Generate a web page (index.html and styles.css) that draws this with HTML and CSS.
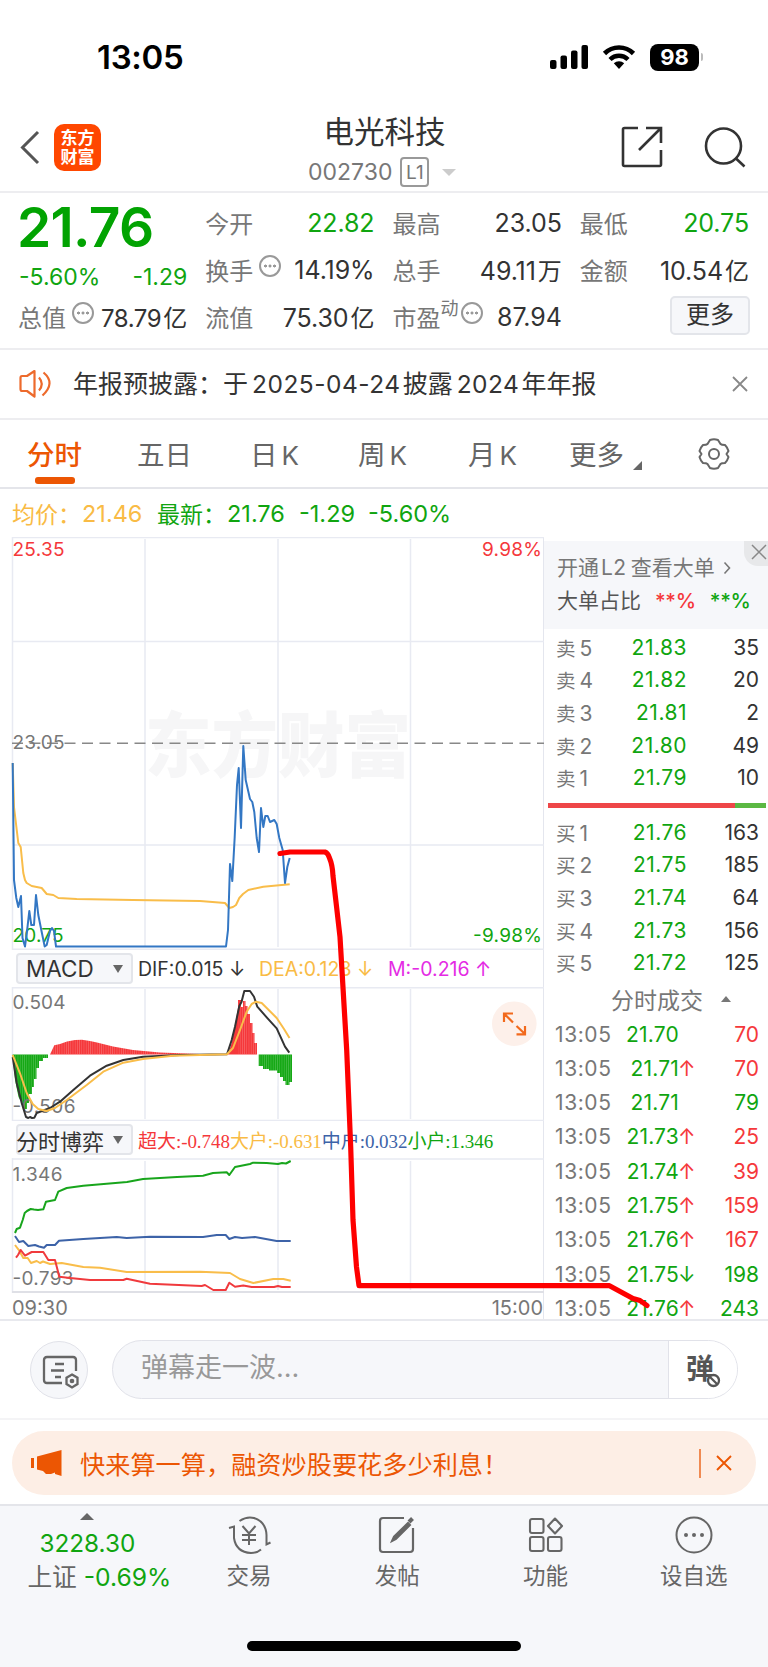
FILE: index.html
```html
<!DOCTYPE html>
<html lang="zh-CN">
<head>
    <meta charset="UTF-8">
    <meta name="viewport" content="width=device-width, initial-scale=1.0">
    <title>电光科技 002730</title>
    <link rel="stylesheet" href="styles.css">
</head>
<body>
<div class="phone">

    <div class="statusBar">
        <div class="time">13:05</div>
        <div class="statusIcons">
            <svg width="38" height="24" viewBox="0 0 38 24">
                <rect x="0" y="15" width="6.500" height="9" rx="2"/>
                <rect x="10.5" y="10.500" width="6.500" height="13.500" rx="2"/>
                <rect x="21" y="5.500" width="6.500" height="18.500" rx="2"/>
                <rect x="31.500" y="0" width="6.500" height="24" rx="2"/>
            </svg>
            <svg class="wifi" width="34" height="24" viewBox="0 0 34 24">
                <path d="M2.500 8.500a20.500 20.500 0 0 1 29 0" fill="none" stroke="#000" stroke-width="4.600"/>
                <path d="M8 14.500a12.800 12.800 0 0 1 18 0" fill="none" stroke="#000" stroke-width="4.400"/>
                <path d="M11.800 18.300a7.500 7.500 0 0 1 10.400 0L17 24z"/>
            </svg>
            <div class="battery">98</div><div class="batteryTip"></div>
        </div>
    </div>

    <div class="header">
        <svg class="back" width="20" height="36" viewBox="0 0 20 36"><path d="M18 2L2.500 17.500L18 33" fill="none" stroke="#555" stroke-width="3"/></svg>
        <div class="logo">东方<br>财富</div>
        <div class="title">
            <div class="name">电光科技</div>
            <div class="code"><span>002730</span><span class="level">L1</span><i class="down"></i></div>
        </div>
        <svg class="share" width="42" height="42" viewBox="0 0 42 42" fill="none" stroke="#333" stroke-width="2.600">
            <path d="M17 2H3.500Q2 2 2 3.500V38.500Q2 40 3.500 40H38.500Q40 40 40 38.500V24"/>
            <path d="M25 2H40V17M40 2L18 24"/>
        </svg>
        <svg class="search" width="42" height="42" viewBox="0 0 42 42" fill="none" stroke="#333" stroke-width="2.600">
            <circle cx="19.500" cy="20" r="17.500"/><path d="M32 32.500L40.500 40.500"/>
        </svg>
    </div>

    <div class="quote">
        <div class="col">
            <div class="price">21.76</div>
            <div class="cell change green"><span>-5.60%</span><span>-1.29</span></div>
            <div class="cell cap"><label>总值</label><i class="more"></i><b>78.79<em>亿</em></b></div>
        </div>
        <div class="col">
            <div class="cell"><label>今开</label><b class="green">22.82</b></div>
            <div class="cell"><label>换手</label><i class="more"></i><b>14.19%</b></div>
            <div class="cell"><label>流值</label><b>75.30<em>亿</em></b></div>
        </div>
        <div class="col">
            <div class="cell"><label>最高</label><b>23.05</b></div>
            <div class="cell"><label>总手</label><b>49.11<em>万</em></b></div>
            <div class="cell"><label>市盈</label><sup>动</sup><i class="more"></i><b>87.94</b></div>
        </div>
        <div class="col">
            <div class="cell"><label>最低</label><b class="green">20.75</b></div>
            <div class="cell"><label>金额</label><b>10.54<em>亿</em></b></div>
            <div class="cell"><div class="moreBtn">更多</div></div>
        </div>
    </div>

    <div class="notice">
        <svg width="34" height="30" viewBox="0 0 34 30" fill="none" stroke="#ed6a2c" stroke-width="2.200" stroke-linejoin="round">
            <path d="M15.500 2L8 7H3Q1.500 7 1.500 9V20Q1.500 22 3 22H8L15.500 27.500Z"/>
            <path d="M20 8.500Q25.500 15 20 21.500M24.500 3.500Q37 14 23.500 26.500"/>
        </svg>
        <div class="noticeText">年报预披露：于<span>2025-04-24</span>披露<span>2024</span>年年报</div>
        <svg class="close" width="16" height="16" viewBox="0 0 16 16"><path d="M1 1L15 15M15 1L1 15" stroke="#888" stroke-width="1.800"/></svg>
    </div>

    <div class="tabs">
        <div class="tab active">分时</div>
        <div class="tab">五日</div>
        <div class="tab">日<span>K</span></div>
        <div class="tab">周<span>K</span></div>
        <div class="tab">月<span>K</span></div>
        <div class="tab">更多<i class="corner"></i></div>
        <svg class="gear" width="34" height="34" viewBox="0 0 34 34" fill="none" stroke="#666" stroke-width="2">
            <path d="M13 3Q17 1.500 21 3L23.500 7Q24.500 8 28 8Q30.500 10.500 31.500 14L29.500 17L31.500 20Q30.500 23.500 28 26Q24.500 26 23.500 27L21 31Q17 32.500 13 31L10.500 27Q9.500 26 6 26Q3.500 23.500 2.500 20L4.500 17L2.500 14Q3.500 10.500 6 8Q9.500 8 10.500 7Z" stroke-linejoin="round"/>
            <circle cx="17" cy="17" r="5"/>
        </svg>
    </div>

    <div class="legend">
        <span class="orange n0">均价：</span><span class="orange n1">21.46</span>
        <span class="green n0">最新：</span><span class="green n2">21.76</span>
        <span class="green n3">-1.29</span><span class="green">-5.60%</span>
    </div>

    <div class="market">
        <div class="charts">
            <!-- intraday price -->
            <svg class="chart" width="544" height="413" viewBox="0 537 544 413">
                <text class="mark" x="145" y="771" textLength="266" lengthAdjust="spacingAndGlyphs">东方财富</text>
                <path class="grid" d="M12 537.500H544M12.500 537V950M12 641.500H544M12 845H544M12 949.300H544M145 539V947M278 539V947M410.500 539V947"/>
                <path d="M12 743.300H544" stroke="#888" stroke-width="1.500" stroke-dasharray="11 6.500"/>
                <text class="axis red" x="12.500" y="556" textLength="52">25.35</text>
                <text class="axis red" x="482" y="556" textLength="60">9.98%</text>
                <text class="axis" x="12.500" y="749" textLength="52">23.05</text>
                <text class="axis green" x="12.500" y="942" textLength="51">20.75</text>
                <text class="axis green" x="473" y="942" textLength="69">-9.98%</text>
                <polyline class="line yellow" points="12.700,763 14,807 18.300,843 20.700,847 23.300,873 25,880 26.700,883 31.700,886 41.700,888 46.700,894 53.300,895 58.300,898 76.700,899 133,900 200,901 225,903 229.300,908 233,907 236,905 239.300,898 243,894 248.300,890 263.300,886.700 289.700,884.300"/>
                <polyline class="line blue" points="12.700,763 14,880 16.300,898 18.300,907 21,896 22.500,938 25,946.500 27.500,927 29.300,911 31.300,925 34,925 36,895 38.300,915 41.300,930 44.700,946.500 46.700,945 50,931 52,928 54,931 56,946.500 226,946.500 228,930 229,897 230,864 232.300,881 234.700,837 237,785 238.700,768 241,828 243.300,746 245.700,780 250,799 252.300,802 254.300,812 256.700,838 259,852 261,808 263.300,827 265.300,816 267.700,816 270,822 274.300,820 276.700,824 279.300,838 282.700,850 285,883 287.300,867 289.700,858"/>
            </svg>

            <div class="indicator">
                <div class="select"><span class="macd">MACD</span><i></i></div>
                <span class="dif">DIF:0.015 ↓</span>
                <span class="dea">DEA:0.123 ↓</span>
                <span class="m">M:-0.216 ↑</span>
            </div>

            <svg class="chart" width="544" height="134" viewBox="0 987 544 134">
                <defs>
                    <pattern id="stripe" width="2.200" height="10" patternUnits="userSpaceOnUse"><rect width=".5" height="10" fill="#fff" opacity=".3"/></pattern>
                </defs>
                <path class="grid" d="M12 987.700H544M12.500 987V1121M145 989V1119M278 989V1119M410.500 989V1119M12 1120.500H544"/>
                <path fill="#f5383b" d="M50 1054.500L54.300 1045.300L60 1044L67 1041.500L75 1040L82 1039.700L90 1041L97 1042.500L113 1046.500L133 1050L160 1052.500L200 1054V1054.500ZM228 1054.500L232 1042L234.500 1028L238 1008V1000H241V1007H243V1001H245.500V1006H247.500V1014H250V1023H252.500V1033H254.500V1043H257V1054.500Z"/>
                <path fill="#15a815" d="M12.500 1054.500L15 1080L18.500 1097L22 1103L24 1106V1109H27V1103H29V1094H32V1087H34V1079H36.500V1068H39V1061H43V1058H48V1054.500ZM258.700 1054.500V1066H263V1069H269V1070.500H277V1073H280V1077H283V1081H285.500V1085H289.500V1082H292V1054.500Z"/>
                <path fill="url(#stripe)" d="M12 1039H200V1054H12ZM238 1001H257V1054H238ZM12 1055H50V1110H12ZM258 1055H292V1086H258Z"/>
                <text class="axis" x="12.500" y="1009" textLength="53">0.504</text>
                <text class="axis" x="12.500" y="1112.500" textLength="63">-0.506</text>
                <polyline class="line black" points="12.700,1057 16.700,1083 21.700,1103 26,1117 28.300,1118 30,1117 32,1118 34.300,1117.700 36.700,1113 42,1111 50,1108 60,1101.700 73.300,1090 90,1075.700 106.700,1065.700 123.300,1060 143,1056.700 180,1055 227,1054.300 231.700,1040 235,1026.700 239.300,1006 241.500,1002 244.300,991 250,991 254,996.700 257.300,1006.700 266.700,1017.300 276.700,1028.300 285,1046.700 289.300,1052.700"/>
                <polyline class="line yellow" points="12.700,1055 20,1073.300 26.700,1093 32.700,1104 38.300,1109 46.700,1111 55,1108 66.700,1100 86.700,1085 103.300,1071.700 123.300,1062.700 143,1059 173,1055.700 227,1054.300 233,1048 240,1030 246.700,1011.700 251.700,1004 256,1001.700 261.700,1003 276.700,1018 284,1029 289.500,1038"/>
                <circle cx="514.300" cy="1023.700" r="22.300" fill="#fdf0ea"/>
                <path d="M513 1022.500L504.500 1014M504 1022V1013.500H513M516.500 1026L525 1034M516.500 1034.300H525V1026" fill="none" stroke="#f2691c" stroke-width="2.200"/>
            </svg>

            <div class="indicator second">
                <div class="select"><span>分时博弈</span><i></i></div>
                <div class="serif"><span class="red">超大:-0.748</span><span class="orange">大户:-0.631</span><span class="navy">中户:0.032</span><span class="green">小户:1.346</span></div>
            </div>

            <svg class="chart" width="544" height="135" viewBox="0 1158 544 135">
                <path class="grid" d="M12 1159H544M12.500 1158V1293M145 1161V1290M278 1161V1290M410.500 1161V1290"/>
                <path d="M12 1292H544" stroke="#dfe0e6" stroke-width="2"/>
                <text class="axis" x="12.500" y="1181" textLength="50">1.346</text>
                <text class="axis" x="12.500" y="1284.500" textLength="61">-0.793</text>
                <polyline class="line up" points="15,1233 16.700,1229 20,1227.700 22.700,1220 24.700,1213 27,1211 30.700,1209 34,1209.500 38,1210 43.300,1209.300 46,1201.700 55,1200 58.300,1191.700 66.700,1188 83.300,1185.700 127,1182 143,1179 177,1177 203,1175.700 213,1173 226.700,1172.300 229.300,1175 235,1167 250,1164 253,1162.700 266.700,1163 278,1164 282,1163 286,1163.500 290.700,1161"/>
                <polyline class="line navyLine" points="15,1236 19,1242 23.300,1241 28.300,1246 35,1245 39,1246.500 44,1247.700 46.700,1245 55,1245 59,1240.700 83.300,1239 116.700,1237 126.700,1238 150,1236.700 203,1237 216.700,1235 225.700,1235 229.300,1239 235,1237 242,1238 255,1237 276.700,1241 290.700,1241"/>
                <polyline class="line yellow" points="15,1245 19.300,1250.700 23.300,1258 27.700,1258 31,1263 36.700,1261 40,1263 43,1261.500 50,1264 61.700,1263 83.300,1267 100,1267.700 126.700,1272 200,1271.700 230,1273 240,1279 253.300,1283 273.300,1279 283.300,1279 290.700,1280.700"/>
                <polyline class="line redLine" points="16,1257.700 18,1255 20.700,1250 25,1255.700 31.700,1252 43.300,1252 48.300,1260 55,1260 59.300,1276.700 70,1278 90,1280 123.300,1280 126.700,1278.700 150,1283.700 201.700,1286 205,1285 213.300,1290 225.700,1290 229.300,1282.700 235,1286.700 243.300,1285.500 251.700,1287 274,1287 278,1286 282,1287 290.700,1287"/>
            </svg>
            <div class="hours"><span>09:30</span><span>15:00</span></div>
        </div>

        <div class="book">
            <div class="l2">
                <div class="l2Line">开通<span>L2</span>查看大单<svg width="9" height="14" viewBox="0 0 9 14"><path d="M1.500 1.500L6.500 7L1.500 12.500" fill="none" stroke="#777" stroke-width="1.600"/></svg></div>
                <div class="l2Line dark">大单占比<b class="red">**%</b><b class="green">**%</b></div>
                <div class="l2Close"><svg width="16" height="16" viewBox="0 0 16 16"><path d="M1 1L15 15M15 1L1 15" stroke="#888" stroke-width="1.500"/></svg></div>
            </div>
            <div class="orders">
                <div class="order"><label>卖<s>5</s></label><span>21.83</span><b>35</b></div>
                <div class="order"><label>卖<s>4</s></label><span>21.82</span><b>20</b></div>
                <div class="order"><label>卖<s>3</s></label><span>21.81</span><b>2</b></div>
                <div class="order"><label>卖<s>2</s></label><span>21.80</span><b>49</b></div>
                <div class="order"><label>卖<s>1</s></label><span>21.79</span><b>10</b></div>
            </div>
            <div class="ratio"></div>
            <div class="orders">
                <div class="order"><label>买<s>1</s></label><span>21.76</span><b>163</b></div>
                <div class="order"><label>买<s>2</s></label><span>21.75</span><b>185</b></div>
                <div class="order"><label>买<s>3</s></label><span>21.74</span><b>64</b></div>
                <div class="order"><label>买<s>4</s></label><span>21.73</span><b>156</b></div>
                <div class="order"><label>买<s>5</s></label><span>21.72</span><b>125</b></div>
            </div>
            <div class="dealTitle">分时成交<i></i></div>
            <div class="deals">
                <div class="deal"><label>13:05</label><span>21.70</span><i></i><b class="red">70</b></div>
                <div class="deal"><label>13:05</label><span>21.71</span><i class="red">↑</i><b class="red">70</b></div>
                <div class="deal"><label>13:05</label><span>21.71</span><i></i><b class="green">79</b></div>
                <div class="deal"><label>13:05</label><span>21.73</span><i class="red">↑</i><b class="red">25</b></div>
                <div class="deal"><label>13:05</label><span>21.74</span><i class="red">↑</i><b class="red">39</b></div>
                <div class="deal"><label>13:05</label><span>21.75</span><i class="red">↑</i><b class="red">159</b></div>
                <div class="deal"><label>13:05</label><span>21.76</span><i class="red">↑</i><b class="red">167</b></div>
                <div class="deal"><label>13:05</label><span>21.75</span><i class="green">↓</i><b class="green">198</b></div>
                <div class="deal"><label>13:05</label><span>21.76</span><i class="red">↑</i><b class="green">243</b></div>
            </div>
        </div>

        <!-- hand drawn line over the chart and the deals -->
        <svg class="scribble" width="768" height="784" viewBox="0 537 768 784">
            <path d="M280 853.500L290 852H325Q328 853 329.500 858Q332.500 865 333 876L336.700 908L340 937L346.700 1050L350.700 1147L353 1220L356.500 1267L359 1285.700H609.500L633 1298.500L640 1300.500L647 1305.500" fill="none" stroke="#fe0000" stroke-width="5.200" stroke-linecap="round" stroke-linejoin="round"/>
        </svg>
    </div>

    <div class="chat">
        <div class="chatSet">
            <svg width="38" height="36" viewBox="0 0 38 36" fill="none" stroke="#666" stroke-width="2.300">
                <path d="M34 16V5Q34 2 31 2H5Q2 2 2 5V25Q2 28 5 28H20M13 9H22M9 15.500H22M13 22H19" stroke-linejoin="round"/>
                <path d="M30 19.500L35.500 22.700V29L30 32.500L24.500 29V22.700Z"/><circle cx="30" cy="26" r="1.200"/>
            </svg>
        </div>
        <div class="chatBox">
            <div class="placeholder">弹幕走一波...</div>
            <div class="bullet">弹
                <svg width="15" height="15" viewBox="0 0 15 15"><circle cx="7.500" cy="7.500" r="5.500" fill="#fff" stroke="#555" stroke-width="2.300"/><path d="M4 4L11 11" stroke="#555" stroke-width="2.300"/></svg>
            </div>
        </div>
    </div>

    <div class="adWrap">
        <div class="ad">
            <svg width="31" height="27" viewBox="0 0 31 27" fill="#ec5603"><rect x="0" y="8" width="3" height="10"/><path d="M6 6.500L30.500 0V26L24 24V22.500L20 24H15L12 21L6 19.500Z"/></svg>
            <div class="adText">快来算一算，融资炒股要花多少利息！</div>
            <div class="adLine"></div>
            <svg width="16" height="16" viewBox="0 0 16 16"><path d="M1 1L15 15M15 1L1 15" stroke="#ec5603" stroke-width="1.900"/></svg>
        </div>
    </div>

    <div class="nav">
        <div class="index">
            <i></i>
            <div class="point green">3228.30</div>
            <div class="indexName">上证 <span class="green">-0.69%</span></div>
        </div>
        <div class="navItem">
            <svg width="44" height="40" viewBox="0 0 44 40" fill="none" stroke="#666" stroke-width="2">
                <path d="M2 13L7 11.500V23Q9 37 24 38Q30 38 34 34.500M12.500 6Q20 1 27 3Q39 7 39.500 20V29.500L43.500 27.500"/>
                <path d="M15.500 11L22 18.500L28.500 11M22 18.500V30M15 20H29M15 25H29"/>
            </svg>
            <span>交易</span>
        </div>
        <div class="navItem">
            <svg width="44" height="40" viewBox="0 0 44 40" fill="none" stroke="#666" stroke-width="2">
                <path d="M29 3H8Q5 3 5 6V34Q5 37 8 37H35Q38 37 38 34V13" stroke-width="2.200"/>
                <path d="M17 26L19 21.500L33 8L35 10L21 24Z" fill="#666"/><path d="M34 7L37.500 3.500" stroke-width="4"/>
            </svg>
            <span>发帖</span>
        </div>
        <div class="navItem">
            <svg width="44" height="40" viewBox="0 0 44 40" fill="none" stroke="#666" stroke-width="2.100">
                <rect x="6" y="4" width="13.500" height="14" rx="2"/><rect x="6" y="22" width="13.500" height="14" rx="2"/><rect x="24" y="22" width="13.500" height="14" rx="2"/>
                <path d="M31 3.500L38 11L31 18.500L24 11Z" stroke-linejoin="round"/>
            </svg>
            <span>功能</span>
        </div>
        <div class="navItem">
            <svg width="44" height="40" viewBox="0 0 44 40" fill="none" stroke="#666" stroke-width="2">
                <circle cx="22" cy="20" r="17.500"/>
                <g fill="#666" stroke="none"><circle cx="14" cy="20" r="2"/><circle cx="22" cy="20" r="2"/><circle cx="30" cy="20" r="2"/></g>
            </svg>
            <span>设自选</span>
        </div>
        <div class="homeBar"></div>
    </div>

</div>
</body>
</html>
```

FILE: styles.css
```css
*{
    box-sizing: border-box;
}

body{
    margin: 0;
    background-color: white;
    font-family: Inter, "Noto Sans CJK SC", sans-serif;
    color: #333;
}

i, em{
    font-style: normal;
}

s{
    text-decoration: none;
}

b{
    font-weight: 400;
}

svg{
    display: block;
    flex: none;
}

.red{ color: #f5383b; fill: #f5383b; }
.green{ color: #10a510; fill: #10a510; }
.orange{ color: #f9bb45; }
.navy{ color: #3d63a8; }

.phone{
    width: 768px;
    height: 1667px;
    overflow: hidden;
}

/* status bar */
.statusBar{
    height: 112px;
    padding: 2px 64px 0 97px;
    display: flex;
    align-items: center;
    justify-content: space-between;
}

.time{
    font-size: 33px;
    font-weight: 600;
    color: black;
    letter-spacing: -0.3px;
}

.statusIcons{
    display: flex;
    align-items: center;
}

.wifi{
    margin: 0 14px 0 14px;
}

.battery{
    width: 49px;
    height: 27px;
    border-radius: 8px;
    background-color: black;
    color: white;
    font-size: 22px;
    font-weight: 700;
    line-height: 27px;
    text-align: center;
}

.batteryTip{
    width: 2px;
    height: 8px;
    margin-left: 2px;
    margin-right: 1px;
    background-color: #bbb;
    border-radius: 0 2px 2px 0;
}

/* header */
.header{
    height: 81px;
    border-bottom: 2px solid #ededf0;
    display: flex;
    padding-left: 20px;
    padding-right: 22px;
}

.back{
    margin-top: 18px;
}

.logo{
    width: 47px;
    height: 47px;
    margin: 12px 0 0 14px;
    padding-top: 5px;
    border-radius: 10px;
    background-color: #ff4700;
    color: white;
    font-size: 17px;
    line-height: 19px;
    font-weight: 700;
    text-align: center;
}

.title{
    margin-left: 208px;
    width: 151px;
    text-align: center;
}

.name{
    margin-top: 3px;
    font-size: 30.5px;
    line-height: 34px;
    white-space: nowrap;
}

.code{
    display: flex;
    align-items: center;
    margin-top: 8px;
    margin-left: -1px;
    font-size: 23px;
    line-height: 30px;
    color: #777;
}

.level{
    width: 29px;
    height: 30px;
    margin-left: 8px;
    border: 2px solid #999;
    border-radius: 4px;
    font-size: 19px;
    line-height: 27px;
}

.down{
    margin-left: 13px;
    border: 7px solid transparent;
    border-top-color: #ccc;
    border-bottom: 0;
}

.share{
    margin: 14px 0 0 161px;
}

.search{
    margin: 14px 0 0 41px;
}

/* quote */
.quote{
    height: 157px;
    border-bottom: 2px solid #ededf0;
    padding: 6px 19px 0;
    display: grid;
    grid-template-columns: repeat(4, 1fr);
    column-gap: 19px;
}

.price{
    height: 55px;
    line-height: 57px;
    font-size: 55px;
    font-weight: 600;
    color: #02a302;
    letter-spacing: -0.7px;
    margin-left: -2px;
}

.cell{
    height: 47px;
    display: flex;
    align-items: center;
    font-size: 24px;
    white-space: nowrap;
}

.cell label{
    color: #777;
    margin-left: -1px;
}

.cell b{
    margin-left: auto;
    font-size: 25px;
    letter-spacing: -0.1px;
}

.cap b{
    font-size: 24px;
    letter-spacing: -0.4px;
}

.cell em{
    margin-left: 2px;
    font-size: 24px;
    letter-spacing: 0;
}

.cell sup{
    font-size: 18px;
    color: #777;
    line-height: 1;
    margin-top: -16px;
}

.cell.change{
    height: 39px;
    justify-content: space-between;
    padding-top: 7px;
    font-size: 23px;
}

.more{
    flex: none;
    width: 22px;
    height: 22px;
    margin-left: 6px;
    margin-top: -8px;
    border: 2px solid #999;
    border-radius: 50%;
    background: radial-gradient(circle at 4.500px 9px, #999 1.200px, transparent 1.800px), radial-gradient(circle at 9px 9px, #999 1.200px, transparent 1.800px), radial-gradient(circle at 13.500px 9px, #999 1.200px, transparent 1.800px);
}

.cell sup + .more{
    margin-left: 2px;
}

.moreBtn{
    width: 80px;
    height: 39px;
    margin-left: auto;
    margin-right: -1px;
    margin-top: -2px;
    border: 2px solid #e3e5ea;
    border-radius: 5px;
    background-color: #f6f7fa;
    font-size: 24px;
    line-height: 34px;
    text-align: center;
}

/* notice */
.notice{
    height: 70px;
    border-bottom: 2px solid #ededf0;
    padding: 0 20px 0 19px;
    display: flex;
    align-items: center;
}

.noticeText{
    margin-left: 20px;
    margin-top: -4px;
    font-size: 25px;
    white-space: nowrap;
}

.noticeText span{
    margin: 0 2px 0 4px;
    font-size: 24.5px;
    letter-spacing: 0.5px;
}

.close{
    margin-left: auto;
}

/* tabs */
.tabs{
    height: 69px;
    border-bottom: 2px solid #e4e5ea;
    display: flex;
    align-items: center;
    padding-left: 27px;
    font-size: 27.5px;
    color: #666;
    white-space: nowrap;
}

.tab{
    position: relative;
    top: -1px;
    width: 55px;
    margin-right: 55px;
}

.tab span{
    margin-left: 4px;
    font-size: 26px;
}

.tab:nth-child(2){ margin-right: 58px; }
.tab:nth-child(3){ margin-right: 53px; }
.tab:nth-child(4){ margin-right: 55px; }
.tab:nth-child(5){ margin-right: 46px; }

.active{
    color: #ec5603;
    font-weight: 500;
}

.active::after{
    content: "";
    position: absolute;
    left: 8px;
    top: 44px;
    width: 40px;
    height: 7px;
    border-radius: 3px;
    background-color: #ec5603;
}

.corner{
    position: absolute;
    left: 64px;
    top: 28px;
    border-left: 9px solid transparent;
    border-bottom: 9px solid #666;
}

.gear{
    margin-left: 18px;
}

/* legend */
.legend{
    height: 48px;
    padding-left: 12px;
    display: flex;
    align-items: center;
    font-size: 23.5px;
    white-space: nowrap;
}

.legend .n0{ width: 70px; font-size: 23px; }
.legend .n1{ width: 75px; }
.legend .n2{ width: 72px; }
.legend .n3{ width: 69px; }

/* charts and order book */
.market{
    position: relative;
    height: 784px;
    border-bottom: 2px solid #e8e9ee;
    display: flex;
}

.charts{
    width: 544px;
    border-right: 1px solid #e4e6ee;
}

.grid{
    fill: none;
    stroke: #e8eaf2;
    stroke-width: 1.5;
}

.mark{
    font-size: 71px;
    font-weight: 900;
    fill: #f6f6f7;
}

.axis{
    font-size: 19px;
    fill: #777;
}

.axis.red{ fill: #f5383b; }
.axis.green{ fill: #10a510; }

.line{
    fill: none;
    stroke-width: 2;
    stroke-linejoin: round;
}

.yellow{ stroke: #f9bd4a; }
.blue{ stroke: #3377c4; }
.black{ stroke: #333; }
.up{ stroke: #18a51c; }
.navyLine{ stroke: #3d63a8; }
.redLine{ stroke: #f03a3d; }

.indicator{
    height: 37px;
    padding-left: 16px;
    display: flex;
    align-items: center;
    font-size: 19.5px;
    white-space: nowrap;
}

.select{
    width: 117px;
    height: 31px;
    margin-right: 5px;
    border: 2px solid #e3e5ea;
    border-radius: 4px;
    background-color: #f6f7fa;
    display: flex;
    align-items: center;
    justify-content: space-between;
    padding-right: 8px;
    font-size: 22px;
}

.second .select span{
    margin-left: -2px;
}

.select i{
    border: 5px solid transparent;
    border-top: 8px solid #666;
    border-bottom: 0;
}

.macd{
    margin-left: 8px;
    font-size: 22.5px;
}

.dif{ width: 121px; }
.dea{ width: 129px; color: #f9bb45; }
.m{ color: #e42be4; }

.serif{
    font-family: "Liberation Serif", "Noto Sans CJK SC", serif;
    font-size: 19px;
    letter-spacing: -0.05px;
    display: flex;
}

.hours{
    height: 27px;
    display: flex;
    justify-content: space-between;
    align-items: center;
    padding: 3px 0 0 12px;
    font-size: 20px;
    color: #777;
}

.book{
    width: 224px;
    padding-top: 4px;
}

.l2{
    position: relative;
    height: 88px;
    padding: 10px 0 0 13px;
    background-color: #f6f7fa;
}

.l2Line{
    height: 33px;
    display: flex;
    align-items: baseline;
    font-size: 21px;
    color: #777;
    white-space: nowrap;
}

.l2Line span{
    margin: 0 4px 0 2px;
    letter-spacing: 0.5px;
}

.l2Line svg{
    margin-left: 8px;
}

.l2Line b{
    margin-left: 14px;
    font-size: 20.5px;
    font-weight: 500;
    letter-spacing: -0.3px;
}

.dark{
    color: #555;
}

.l2Close{
    position: absolute;
    right: 0;
    top: 0;
    width: 24px;
    height: 25px;
    padding: 3px 0 0 7px;
    background-color: #e7e8ea;
    border-bottom-left-radius: 14px;
}

.orders{
    padding-top: 2px;
}

.order, .deal{
    height: 32.600px;
    padding: 0 9px 0 12px;
    display: flex;
    align-items: center;
    font-size: 21px;
    white-space: nowrap;
}

label{
    color: #777;
}

.order label{
    width: 60px;
    font-size: 19.5px;
}

.order s{
    margin-left: 4px;
    font-size: 21px;
}

.order span{
    width: 71px;
    text-align: right;
    letter-spacing: 0.5px;
    color: #10a510;
}

.order b, .deal b{
    margin-left: auto;
}

.ratio{
    height: 5px;
    margin: 9px 2px 6px 4px;
    background: linear-gradient(90deg, #ee4648 0 187px, #5bb843 187px);
}

.dealTitle{
    height: 38px;
    padding: 3px 0 0 67px;
    display: flex;
    align-items: center;
    font-size: 23px;
    color: #777;
    white-space: nowrap;
}

.dealTitle i{
    margin-left: 18px;
    border: 5px solid transparent;
    border-bottom: 6px solid #777;
    border-top: 0;
}

.deal{
    height: 34.300px;
}

.deal label{
    width: 60px;
    margin-left: -1px;
    letter-spacing: 0.6px;
}

.deal span{
    width: 64px;
    text-align: right;
    letter-spacing: 0.2px;
    color: #10a510;
}

.deal i{
    margin-left: -1px;
}

.scribble{
    position: absolute;
    left: 0;
    top: 0;
}

/* chat input */
.chat{
    height: 99px;
    border-bottom: 2px solid #f4f4f6;
    padding: 0 30px 0 30px;
    display: flex;
    align-items: center;
}

.chatSet{
    width: 58px;
    height: 58px;
    border: 1.500px solid #e1e2e9;
    border-radius: 50%;
    background-color: #f6f7fa;
    padding: 13px 0 0 11px;
}

.chatBox{
    flex: 1;
    height: 59px;
    margin-left: 24px;
    border: 1.500px solid #e1e2e9;
    border-radius: 30px;
    background-color: #f6f7fa;
    display: flex;
    overflow: hidden;
}

.placeholder{
    flex: 1;
    padding-left: 28px;
    font-size: 27px;
    line-height: 53px;
    color: #999;
}

.bullet{
    position: relative;
    width: 69px;
    border-left: 1.500px solid #e1e2e9;
    background-color: white;
    padding-left: 17px;
    font-size: 28px;
    font-weight: 700;
    line-height: 56px;
    color: #555;
}

.bullet svg{
    position: absolute;
    left: 37px;
    top: 32px;
}

/* ad banner */
.adWrap{
    height: 86px;
    border-bottom: 2px solid #e4e5ea;
    padding: 11px 12px 0;
}

.ad{
    height: 64px;
    border-radius: 32px;
    background-color: #fdeee5;
    display: flex;
    align-items: center;
    padding: 0 24px 0 19px;
    color: #ec5603;
}

.adText{
    flex: 1;
    margin-left: 18px;
    font-size: 25.2px;
    white-space: nowrap;
}

.adLine{
    width: 2px;
    height: 29px;
    margin-right: 15px;
    background-color: #f08a52;
}

/* bottom nav */
.nav{
    position: relative;
    height: 161px;
    background-color: #f6f7fa;
    display: flex;
}

.index{
    width: 175px;
    display: flex;
    flex-direction: column;
    align-items: center;
    padding-top: 7px;
}

.index i{
    border: 7px solid transparent;
    border-bottom: 7px solid #666;
    border-top: 0;
}

.point{
    height: 32px;
    margin-top: 7px;
    font-size: 24.3px;
    line-height: 32px;
}

.indexName{
    height: 36px;
    padding-left: 24px;
    font-size: 24.7px;
    line-height: 36px;
    color: #666;
    white-space: nowrap;
}

.navItem{
    width: 148.500px;
    display: flex;
    flex-direction: column;
    align-items: center;
    padding-top: 9px;
    font-size: 22.5px;
    line-height: 32px;
    color: #666;
}

.navItem span{
    margin-top: 5px;
}

.homeBar{
    position: absolute;
    left: 247px;
    top: 135px;
    width: 274px;
    height: 10px;
    border-radius: 5px;
    background-color: black;
}
```
